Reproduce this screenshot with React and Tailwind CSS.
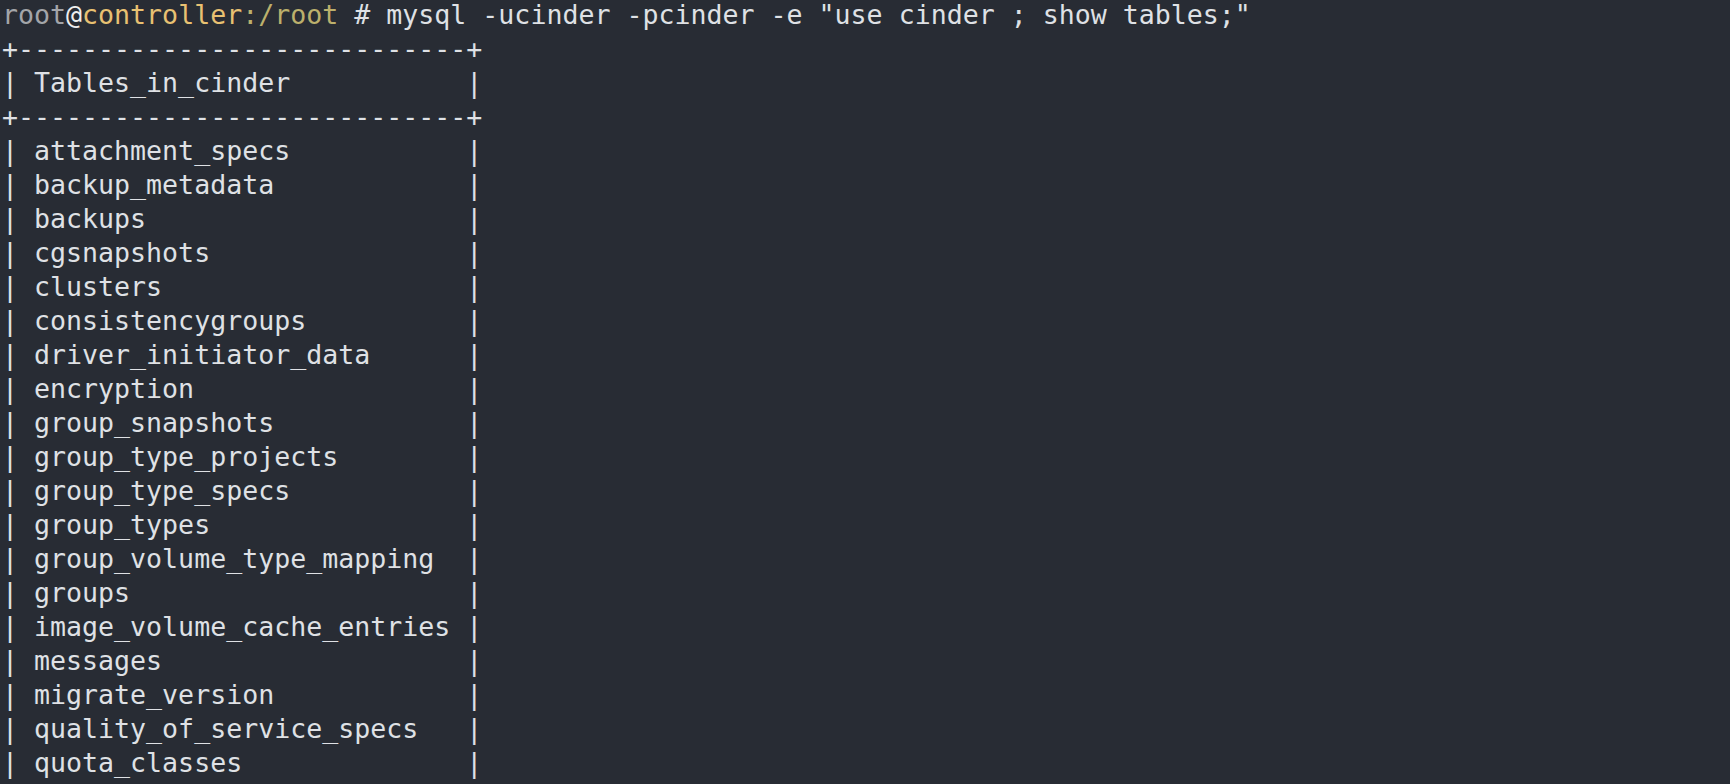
import React from 'react'

const TABLES = [
    'attachment_specs',
    'backup_metadata',
    'backups',
    'cgsnapshots',
    'clusters',
    'consistencygroups',
    'driver_initiator_data',
    'encryption',
    'group_snapshots',
    'group_type_projects',
    'group_type_specs',
    'group_types',
    'group_volume_type_mapping',
    'groups',
    'image_volume_cache_entries',
    'messages',
    'migrate_version',
    'quality_of_service_specs',
    'quota_classes',
]

const WIDTH = 26
const border = '+' + '-'.repeat(WIDTH + 2) + '+'
const row = (s) => '| ' + s.padEnd(WIDTH, ' ') + ' |'

const App = () => {
    return (
        <div className="flex w-full h-[784px] overflow-hidden bg-[#282c34]">
            <pre
                className="-mt-[2px] pl-[2px] text-[26.6px] leading-[34px] text-[#dfe1e5] whitespace-pre"
                style={{ fontFamily: '"DejaVu Sans Mono", "Liberation Mono", monospace' }}
            >
                <div>
                    <span className="text-[#a3a5a9]">root</span>
                    <span className="text-[#eeeeee]">@</span>
                    <span className="text-[#e8c172]">controller</span>
                    <span className="text-[#bcb06c]">:/root</span>
                    <span> # mysql -ucinder -pcinder -e "use cinder ; show tables;"</span>
                </div>
                <div>{border}</div>
                <div>{row('Tables_in_cinder')}</div>
                <div>{border}</div>
                {TABLES.map((t) => (
                    <div key={t}>{row(t)}</div>
                ))}
            </pre>
        </div>
    )
}

export default App
